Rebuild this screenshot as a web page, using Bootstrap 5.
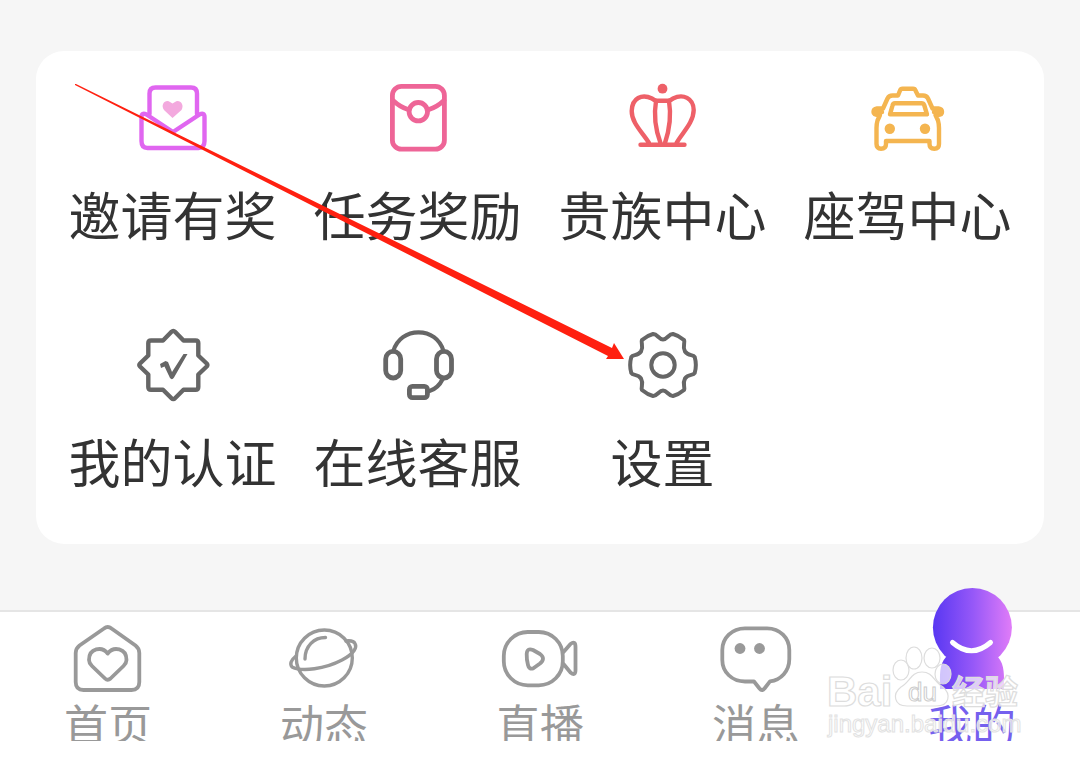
<!DOCTYPE html>
<html lang="zh-CN">
<head>
<meta charset="utf-8">
<meta name="viewport" content="width=device-width, initial-scale=1">
<title>我的</title>
<link rel="stylesheet" href="https://cdn.jsdelivr.net/npm/bootstrap@5.3.0/dist/css/bootstrap.min.css">
<style>
  body { background: #f6f6f6; color: #333; font-family: "Noto Sans CJK SC", sans-serif; }
  main { padding: 51px 36px 66px; }
  .panel { border-radius: 28px; padding: 27px 14px 53px; }
  .tiles { row-gap: 81px; }
  .tile { color: #333; font-size: 52px; line-height: 60px; gap: 26px; }
  .tabs { border-top: 2px solid #e5e5e5; padding-top: 6px; }
  .tab { color: #999; font-size: 44px; line-height: 44px; gap: 3px; }
  .tab.active { color: #7560ee; }
  .tab-label { height: 40px; overflow: hidden; }
  .glyph { width: 80px; height: 80px; fill: none; stroke: currentColor; stroke-linecap: round; stroke-linejoin: round; }
  .solid { fill: currentColor; stroke: none; }
  .avatar { height: 112px; margin-top: -32px; stroke: none; }
  .invite { color: #e066f0; }
  .reward { color: #ee6597; }
  .noble { color: #ee6068; }
  .ride { color: #f4b550; }
  .plain { color: #666; }
  .pointer { left: 39px; top: 33px; width: 550px; height: 278px; }
  .stamp { right: 56px; top: 32px; width: 200px; height: 96px; font-family: "Liberation Sans", "Noto Sans CJK SC", sans-serif; }
</style>
</head>
<body class="d-flex flex-column min-vh-100">
<main>
  <section class="panel bg-white position-relative">
    <div class="tiles row row-cols-4 gx-0">
      <a href="#invite" class="tile col d-flex flex-column align-items-center text-decoration-none text-nowrap">
        <svg class="glyph invite" viewBox="0 0 80 80" stroke-width="4.4" aria-hidden="true">
          <path d="M16.500 36V15.500q0-6 6-6h35.500q6 0 6 6v20.500"/>
          <path d="M8.500 39q0-5 5-2.500L40 54l26.500-17.500q5-2.500 5 2.500v24q0 7-6 7h-51q-6 0-6-7Z"/>
          <path class="solid" fill="#f0a8dc" style="fill:#f3a9de" d="M39.500 40 31 32C27 26 33 21 37 24L39.500 25.500 42 24C46 21 52 26 48.500 32Z"/>
        </svg>
        <span>邀请有奖</span>
      </a>
      <a href="#tasks" class="tile col d-flex flex-column align-items-center text-decoration-none text-nowrap">
        <svg class="glyph reward" viewBox="0 0 80 80" stroke-width="4.8" aria-hidden="true">
          <rect x="14.4" y="8.4" width="52" height="62.8" rx="9"/>
          <circle cx="40.3" cy="33.7" r="9.2"/>
          <path d="M15 22.500Q22 29 30 31.500M66 22.500Q59 29 51 31.500"/>
        </svg>
        <span>任务奖励</span>
      </a>
      <a href="#noble" class="tile col d-flex flex-column align-items-center text-decoration-none text-nowrap">
        <svg class="glyph noble" viewBox="0 0 80 80" stroke-width="4.4" aria-hidden="true">
          <circle class="solid" cx="39.5" cy="10.7" r="4.9"/>
          <path d="M17.500 66.700H61.500M26 65C20 55 8.500 45 8.700 33C9 20 19 15.500 29 20.500Q31.500 22.700 34 22.700H45Q47.500 22.700 50 20.500C60 15.500 70.500 20 70.700 32C70.500 45 59 55 53.500 65"/>
          <path d="M33 23C30.500 38 33 53 37.500 65M46 23C48.500 38 46 53 42 65"/>
        </svg>
        <span>贵族中心</span>
      </a>
      <a href="#ride" class="tile col d-flex flex-column align-items-center text-decoration-none text-nowrap">
        <svg class="glyph ride" viewBox="0 0 80 80" stroke-width="4.4" aria-hidden="true">
          <path d="M30 17.500 32 12.500Q32.700 10.700 34.500 10.700H45Q47 10.700 47.500 12.500L50 17.500H55Q58.500 17.500 60 20.500L64.500 30.500H70.500Q74 31 74 34Q74 37 69.500 37H67.500L70 42.500Q71 46 71 50V66Q71 70.700 66.300 70.700Q61.500 70.700 61.500 66V63H18V66Q18 70.700 13 70.700Q8.500 70.700 8.500 66V50Q8.500 46 9.500 42.500L12 37H10Q5.500 37 5.500 34Q5.500 31 9 30.500H15L19.500 20.500Q21 17.500 24.500 17.500Z"/>
          <path d="M8 34H14M66 34H71"/>
          <path d="M27 25.300H53.500Q55.500 25.300 56.200 27L59 36.300H22L24.500 27.500Q25 25.300 27 25.300Z"/>
          <circle class="solid" cx="21.8" cy="50.7" r="5.2"/><circle class="solid" cx="57" cy="50.7" r="5.2"/>
        </svg>
        <span>座驾中心</span>
      </a>
      <a href="#verify" class="tile col d-flex flex-column align-items-center text-decoration-none text-nowrap">
        <svg class="glyph plain" viewBox="0 0 80 80" stroke-width="4.4" aria-hidden="true">
          <path d="M38.500 6.800Q40.300 5 42 6.800L50.500 15.500H62.500Q65.300 15.500 65.300 18V30.500L73.700 38.500Q75 40 73.700 41.500L65.300 49.500V62Q65.300 64.800 62.500 64.800H50.500L42 73.200Q40.300 75 38.500 73.200L30 64.800H18Q15.300 64.800 15.300 62V49.500L7 41.500Q5.500 40 7 38.500L15.300 30.500V18Q15.300 15.500 18 15.500H30Z"/>
          <path class="solid" d="M27 39 32.500 36 35 37 39 47 50.500 29H54.500L41 52.500Q39 55.500 37 53L31.500 41.500 28 43Z"/>
        </svg>
        <span>我的认证</span>
      </a>
      <a href="#service" class="tile col d-flex flex-column align-items-center text-decoration-none text-nowrap">
        <svg class="glyph plain" viewBox="0 0 80 80" stroke-width="4.8" aria-hidden="true">
          <rect x="7.7" y="26.4" width="15" height="26.6" rx="7.5"/><rect x="58.500" y="26.4" width="15" height="26.6" rx="7.5"/>
          <path stroke-width="4.2" d="M15.300 26C19 14 29 7.300 40.500 7.300S62 14 65.500 26M64.700 54Q60 63.500 51.500 66"/>
          <rect x="31.4" y="61.4" width="18" height="11.2" rx="3"/>
        </svg>
        <span>在线客服</span>
      </a>
      <a href="#settings" class="tile col d-flex flex-column align-items-center text-decoration-none text-nowrap">
        <svg class="glyph plain" viewBox="0 0 80 80" stroke-width="4" aria-hidden="true">
          <path d="M40 14.500C36 14.500 34 8.500 30 9C26 10 22 12.500 19 15C17.500 18 21 21 18 26.500C14.500 31.500 10 29 8.300 32Q6 40 8.300 48C10 51 14.500 48.500 18 53.500C21 59 17.500 62 19 65C22 67.500 26 70 30 71C34 71.500 36 65.500 40 65.500C44 65.500 46 71.500 50 71C54 70 58 67.500 61 65C62.500 62 59 59 62 53.500C65.500 48.500 70 51 71.700 48Q74 40 71.700 32C70 29 65.500 31.500 62 26.500C59 21 62.500 18 61 15C58 12.500 54 10 50 9C46 8.500 44 14.500 40 14.500Z"/>
          <circle cx="40" cy="40" r="11.7"/>
        </svg>
        <span>设置</span>
      </a>
    </div>
    <svg class="pointer position-absolute pe-none" viewBox="0 0 550 278" aria-hidden="true">
      <path fill="#ff2010" d="M0 0 1 0 537 264 539 259 549 275 531 275 533 272 0 1Z"/>
    </svg>
  </section>
</main>
<nav class="tabs bg-white flex-grow-1 position-relative">
  <div class="row row-cols-5 gx-0">
    <a href="#home" class="tab col d-flex flex-column align-items-center text-decoration-none text-nowrap">
      <svg class="glyph" viewBox="0 0 80 80" stroke-width="3.8" aria-hidden="true">
        <path d="M36 10.500Q39.700 7.500 43.500 10.500L67.500 27.500Q71.300 30.500 71.300 35V64Q71.300 72 63.500 72H15.500Q7.700 72 7.700 64V35Q7.700 30.500 11.500 27.500Z"/>
        <path d="M39.700 35.500C34 28 21 30 21 42Q21 45 24 48L37 60.500Q39.700 63 42.500 60.500L55.500 48Q58.500 45 58.500 42C58.500 30 45.500 28 39.700 35.500Z"/>
      </svg>
      <span class="tab-label">首页</span>
    </a>
    <a href="#feed" class="tab col d-flex flex-column align-items-center text-decoration-none text-nowrap">
      <svg class="glyph" viewBox="0 0 80 80" stroke-width="3.4" aria-hidden="true">
        <circle cx="40.3" cy="40" r="28"/>
        <path d="M21 41C21 28 30 19.500 41.500 19.500M12 38C7 42 5.500 46 8 49C18 54 41 51 58 42C71 35 73 29 71 25.500C69.500 22.500 66 22.500 62 23"/>
      </svg>
      <span class="tab-label">动态</span>
    </a>
    <a href="#live" class="tab col d-flex flex-column align-items-center text-decoration-none text-nowrap">
      <svg class="glyph" viewBox="0 0 80 80" stroke-width="3.8" aria-hidden="true">
        <rect x="3.8" y="14" width="59" height="53.3" rx="24"/>
        <path d="M63.500 34 70.500 26Q75.500 22.500 75.500 29V52Q75.500 58.500 70.500 54.500L63.500 46M26.700 36Q27 29.500 33 32L40 36Q46 40.500 40 45.500L33 50.500Q29 51.500 28 47Q26.500 41 26.700 36Z"/>
      </svg>
      <span class="tab-label">直播</span>
    </a>
    <a href="#messages" class="tab col d-flex flex-column align-items-center text-decoration-none text-nowrap">
      <svg class="glyph" viewBox="0 0 80 80" stroke-width="3.8" aria-hidden="true">
        <path d="M29 10.300H51C64 10.300 73.300 20 73.300 32V41C73.300 53 65 62 54 63.300L48.500 70.500Q46 73.500 43.500 70.500L38 63.500H29C16 63.500 6.300 54 6.300 42V32C6.300 20 16 10.300 29 10.300Z"/>
        <circle class="solid" cx="24" cy="30.5" r="5.4"/><circle class="solid" cx="43.5" cy="30.5" r="5.4"/>
      </svg>
      <span class="tab-label">消息</span>
    </a>
    <a href="#me" aria-current="page" class="tab active col d-flex flex-column align-items-center text-decoration-none text-nowrap">
      <svg class="glyph avatar" viewBox="0 0 80 112" aria-hidden="true">
        <defs><linearGradient id="violet" gradientUnits="userSpaceOnUse" x1="2" y1="0" x2="80" y2="0"><stop offset="0" stop-color="#5a38f2"/><stop offset=".5" stop-color="#9658f8"/><stop offset="1" stop-color="#e07cf8"/></linearGradient></defs>
        <circle cx="40.4" cy="41.5" r="39.5" fill="url(#violet)"/>
        <path fill="url(#violet)" d="M14 71C7 79 8 88 8 103H72C72 90 73 79 66 71Z"/>
        <path d="M20.500 56.500Q39.500 73 58.500 56.500" stroke="#fff" stroke-width="5"/>
      </svg>
      <span class="tab-label">我的</span>
    </a>
  </div>
  <svg class="stamp position-absolute pe-none" viewBox="0 0 200 96" fill="#fff" fill-opacity=".7" stroke="#ddd" stroke-width="1.2" aria-hidden="true">
    <text x="3" y="62" font-weight="700" font-size="42">Bai</text>
    <ellipse cx="77" cy="26" rx="8" ry="10"/><ellipse cx="90" cy="14" rx="8" ry="11"/><ellipse cx="108" cy="14" rx="8" ry="10"/><ellipse cx="119" cy="30" rx="8" ry="10"/>
    <path d="M98 28C87 28 86 38 77 43C68 50 70 62 83 62H112C126 62 127 50 119 43C110 38 109 28 98 28Z"/>
    <text x="84" y="57" font-size="26" stroke="#ccc" stroke-width="1">du</text>
    <text x="128" y="60" font-size="33" font-weight="700">经验</text>
    <text x="4" y="88" font-size="24" stroke="#e2e2e2" stroke-width="1">jingyan.baidu.com</text>
  </svg>
</nav>
<script src="https://cdn.jsdelivr.net/npm/bootstrap@5.3.0/dist/js/bootstrap.bundle.min.js"></script>
</body>
</html>
